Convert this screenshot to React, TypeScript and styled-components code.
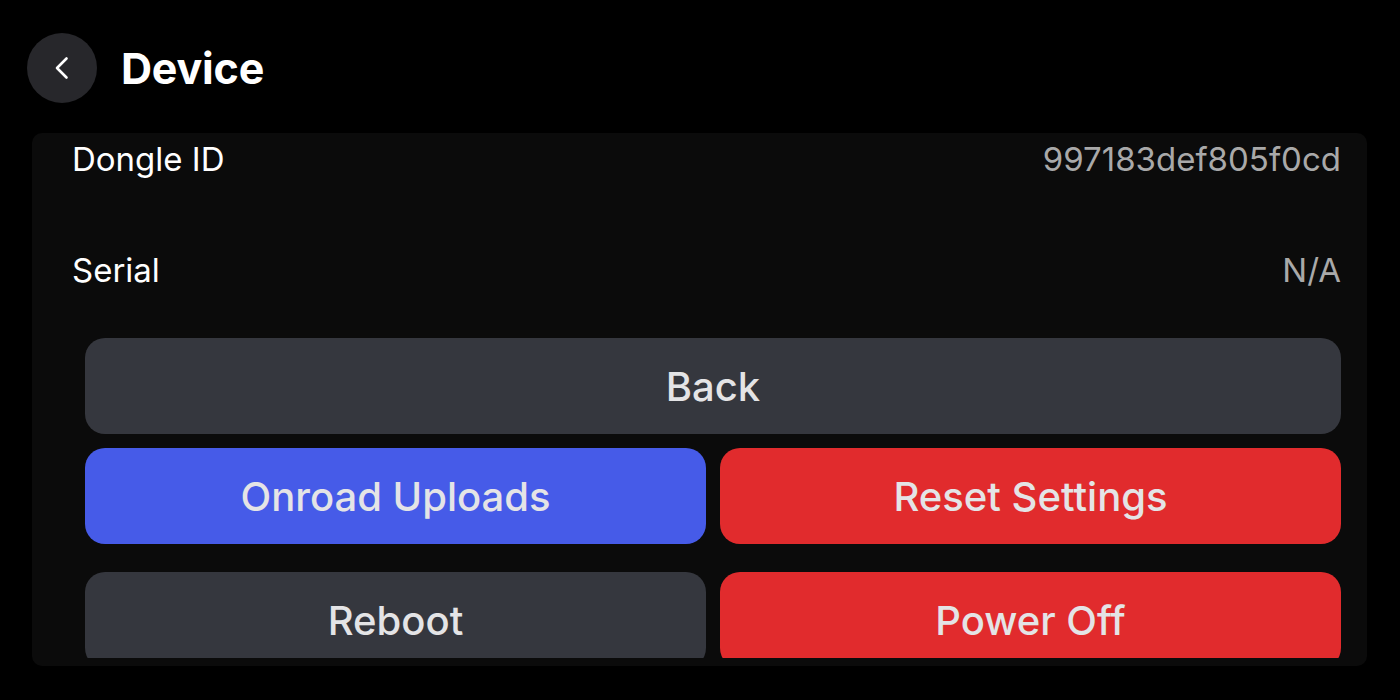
import React, { useLayoutEffect, useRef } from "react"
import styled, { createGlobalStyle } from "styled-components"

const GlobalStyle = createGlobalStyle`
  html, body {
    margin: 0;
    padding: 0;
    background: #000;
    font-family: Inter, "Noto Sans", sans-serif;
    -webkit-font-smoothing: antialiased;
  }
`

type Tone = "neutral" | "primary" | "danger"

const toneColors: Record<Tone, string> = {
  neutral: "#35373e",
  primary: "#465be8",
  danger: "#e12b2d",
}

const rows = [
  { label: "Dongle ID", value: "997183def805f0cd" },
  { label: "Serial", value: "N/A" },
]

export default function App() {
  const listRef = useRef<HTMLDivElement>(null)

  // the list is shown scrolled a little past its top
  useLayoutEffect(() => {
    if (listRef.current) listRef.current.scrollTop = 30
  }, [])

  return (
    <>
      <GlobalStyle />
      <Screen>
        <Header>
          <BackCircle aria-label="Back">
            <svg width="24" height="24" viewBox="0 0 24 24" fill="none">
              <path d="M16.5 2.5L7 12l9.5 9.5" stroke="#fff" strokeWidth="2.6" strokeLinecap="round" strokeLinejoin="round" />
            </svg>
          </BackCircle>
          <Title>Device</Title>
        </Header>
        <Panel>
          <List ref={listRef}>
            {rows.map((r) => (
              <Row key={r.label}>
                <Label>{r.label}</Label>
                <Value>{r.value}</Value>
              </Row>
            ))}
            <Actions>
              <ActionButton $tone="neutral" $wide>Back</ActionButton>
              <ActionButton $tone="primary">Onroad Uploads</ActionButton>
              <ActionButton $tone="danger">Reset Settings</ActionButton>
              <Spacer />
              <ActionButton $tone="neutral">Reboot</ActionButton>
              <ActionButton $tone="danger">Power Off</ActionButton>
            </Actions>
          </List>
        </Panel>
      </Screen>
    </>
  )
}

const Screen = styled.div`
  width: 1400px;
  height: 700px;
  box-sizing: border-box;
  padding: 33px 33px 34px 32px;
  display: flex;
  flex-direction: column;
  gap: 30px;
`
const Header = styled.div`
  display: flex;
  align-items: center;
  gap: 24px;
  margin-left: -5px;
`
const BackCircle = styled.button`
  width: 70px;
  height: 70px;
  border-radius: 50%;
  border: none;
  background: #27272b;
  display: flex;
  align-items: center;
  justify-content: center;
  padding: 0;
`
const Title = styled.h1`
  margin: 0;
  color: #fff;
  font-size: 43px;
  font-weight: 700;
  letter-spacing: -0.2px;
`
const Panel = styled.div`
  flex: 1;
  background: #0b0b0b;
  border-radius: 10px;
  padding: 0 26px 8px 40px;
  display: flex;
  flex-direction: column;
  min-height: 0;
`
const List = styled.div`
  flex: 1;
  overflow: hidden;
`
const Row = styled.div`
  height: 111px;
  display: flex;
  align-items: center;
  justify-content: space-between;
`
const Label = styled.span`
  color: #fff;
  font-size: 33px;
`
const Value = styled.span`
  color: #a9a9a9;
  font-size: 33px;
`
const Actions = styled.div`
  margin: 13px 0 0 13px;
  display: grid;
  grid-template-columns: 1fr 1fr;
  column-gap: 14px;
  row-gap: 14px;
`
const Spacer = styled.div`
  grid-column: 1 / -1;
  height: 0;
`
const ActionButton = styled.button<{ $tone: Tone; $wide?: boolean }>`
  grid-column: ${(p) => (p.$wide ? "1 / -1" : "auto")};
  height: 96px;
  border: none;
  border-radius: 20px;
  background: ${(p) => toneColors[p.$tone]};
  color: #e4e4e6;
  font-family: Inter, "Noto Sans", sans-serif;
  font-size: 40px;
  font-weight: 500;
`
